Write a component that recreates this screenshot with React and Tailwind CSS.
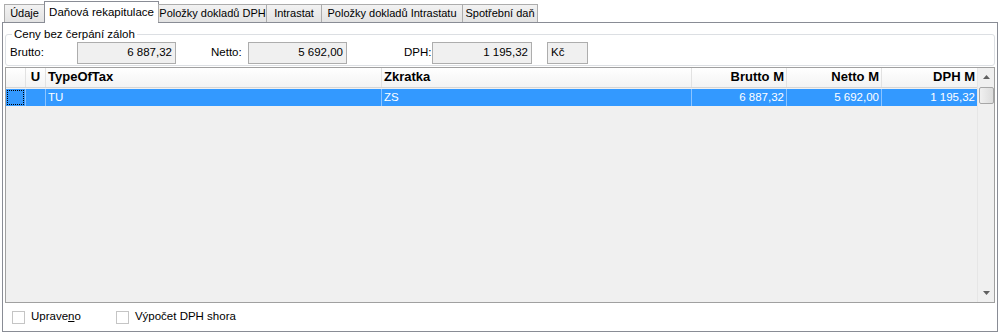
import React from 'react';

const tabs = [
  { label: 'Údaje', w: 'w-[41px]' },
  { label: 'Daňová rekapitulace', w: 'w-[115px]', active: true },
  { label: 'Položky dokladů DPH', w: 'w-[109px]' },
  { label: 'Intrastat', w: 'w-[56px]' },
  { label: 'Položky dokladů Intrastatu', w: 'w-[142px]' },
  { label: 'Spotřební daň', w: 'w-[76px]' },
];

const Box = ({ children, w, left }) => (
  <div
    className={`${w} h-[22px] bg-[#f0f0f0] border border-[#adadad] flex items-center px-[3px] whitespace-nowrap ${left ? 'justify-start' : 'justify-end'}`}
  >
    {children}
  </div>
);

const App = () => {
  return (
    <div
      className="w-[1000px] h-[333px] bg-white text-black text-[11.5px] overflow-hidden"
      style={{ fontFamily: '"Liberation Sans", Arial, sans-serif' }}
    >
      {/* tabs */}
      <div className="flex items-end h-[22px] pl-[4px] relative z-10 text-[11px]">
        {tabs.map((t) =>
          t.active ? (
            <div
              key={t.label}
              className={`${t.w} h-[22px] -mb-px -ml-px bg-white border border-b-0 border-[#898c95] flex items-center justify-center whitespace-nowrap text-[11.5px]`}
            >
              {t.label}
            </div>
          ) : (
            <div
              key={t.label}
              className={`${t.w} h-[18px] bg-gradient-to-b from-[#f2f2f2] to-[#e3e3e3] border border-[#acacac] border-b-0 -ml-px first:ml-0 flex items-center justify-center whitespace-nowrap`}
            >
              {t.label}
            </div>
          )
        )}
      </div>

      {/* panel */}
      <div className="mx-[2px] h-[310px] border border-[#898c95] bg-white flex flex-col px-[2px]">
        {/* group box */}
        <div className="relative mt-[11px] border border-[#dcdfe3] rounded-[3px] pl-[4px] pt-[7px] pb-[1px]">
          <span className="absolute -top-[8px] left-[6px] bg-white px-[2px] leading-[14px] whitespace-nowrap">
            Ceny bez čerpání záloh
          </span>
          <div className="flex items-center">
            <span className="w-[67px]">Brutto:</span>
            <Box w="w-[99px]">6 887,32</Box>
            <span className="w-[37px] ml-[35px]">Netto:</span>
            <Box w="w-[99px]">5 692,00</Box>
            <span className="w-[28px] ml-[57px]">DPH:</span>
            <Box w="w-[100px]">1 195,32</Box>
            <div className="ml-[15px]">
              <Box w="w-[41px]" left>Kč</Box>
            </div>
          </div>
        </div>

        {/* grid */}
        <div className="mt-[1px] h-[237px] border border-[#a0a0a0] flex bg-[#f0f0f0]">
          <div className="flex-1 flex flex-col">
            <div className="h-[20px] flex bg-gradient-to-b from-white to-[#f3f3f3] border-b border-[#d5d5d5] font-bold text-[13px] whitespace-nowrap">
              <div className="w-[20px] h-full border-r border-[#e2e2e2]" />
              <div className="w-[20px] h-full border-r border-[#e2e2e2] flex items-end justify-center pb-[1px]">U</div>
              <div className="w-[336px] h-full border-r border-[#e2e2e2] flex items-end pl-[2px] pb-[1px]">TypeOfTax</div>
              <div className="w-[310px] h-full border-r border-[#e2e2e2] flex items-end pl-[2px] pb-[1px]">Zkratka</div>
              <div className="w-[95px] h-full border-r border-[#e2e2e2] flex items-end justify-end pr-[2px] pb-[1px]">Brutto M</div>
              <div className="w-[95px] h-full border-r border-[#e2e2e2] flex items-end justify-end pr-[2px] pb-[1px]">Netto M</div>
              <div className="flex-1 h-full flex items-end justify-end pr-[2px] pb-[1px]">DPH M</div>
            </div>
            <div className="h-[17px] mt-[1px] flex bg-[#3399ff] text-white whitespace-nowrap">
              <div className="w-[20px] h-full border-r border-[#8cc4ff] p-[1px]">
                <div className="w-full h-full border border-dotted border-black" />
              </div>
              <div className="w-[20px] h-full border-r border-[#8cc4ff]" />
              <div className="w-[336px] h-full border-r border-[#8cc4ff] flex items-center pl-[2px]">TU</div>
              <div className="w-[310px] h-full border-r border-[#8cc4ff] flex items-center pl-[2px]">ZS</div>
              <div className="w-[95px] h-full border-r border-[#8cc4ff] flex items-center justify-end pr-[2px]">6 887,32</div>
              <div className="w-[95px] h-full border-r border-[#8cc4ff] flex items-center justify-end pr-[2px]">5 692,00</div>
              <div className="flex-1 h-full flex items-center justify-end pr-[2px]">1 195,32</div>
            </div>
          </div>
          {/* scrollbar */}
          <div className="w-[17px] flex flex-col items-center bg-[#f0f0f0] border-l border-[#e6e6e6]">
            <div className="h-[18px] w-full flex items-center justify-center">
              <svg width="7" height="4" viewBox="0 0 7 4">
                <path d="M3.5 0 L7 4 L0 4 Z" fill="#606060" />
              </svg>
            </div>
            <div className="w-[15px] h-[17px] mt-[1px] rounded-[2px] border border-[#a7a7a7] bg-gradient-to-r from-[#f0f0f0] to-[#dcdcdc]" />
            <div className="flex-1" />
            <div className="h-[18px] w-full flex items-center justify-center">
              <svg width="7" height="4" viewBox="0 0 7 4">
                <path d="M0 0 L7 0 L3.5 4 Z" fill="#606060" />
              </svg>
            </div>
          </div>
        </div>

        {/* checkboxes */}
        <div className="flex items-center h-[28px] pl-[7px]">
          <div className="w-[13px] h-[13px] border border-[#c5c5c5] bg-white" />
          <span className="ml-[6px]">
            Uprave<span className="underline">n</span>o
          </span>
          <div className="w-[13px] h-[13px] border border-[#c5c5c5] bg-white ml-[35px]" />
          <span className="ml-[6px]">Výpočet DPH shora</span>
        </div>
      </div>
    </div>
  );
};

export default App;
